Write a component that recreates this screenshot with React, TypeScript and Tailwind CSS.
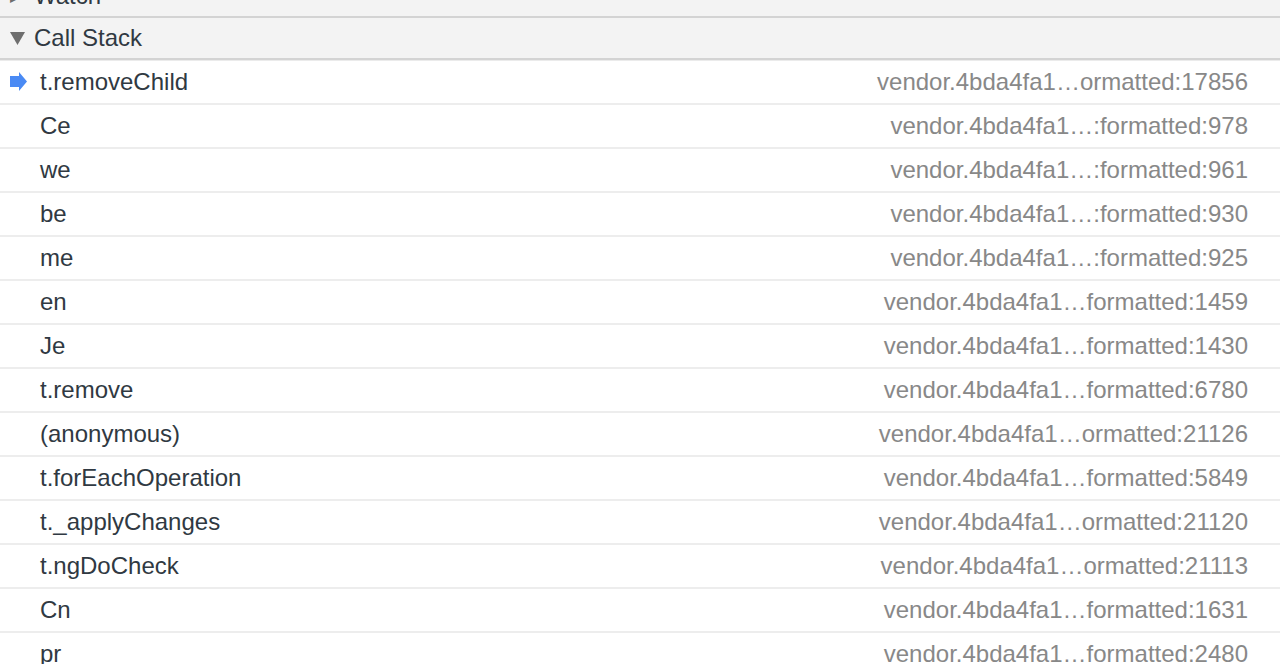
import React from 'react';

type Frame = { name: string; location: string };

const frames: Frame[] = [
  { name: 't.removeChild', location: 'vendor.4bda4fa1…ormatted:17856' },
  { name: 'Ce', location: 'vendor.4bda4fa1…:formatted:978' },
  { name: 'we', location: 'vendor.4bda4fa1…:formatted:961' },
  { name: 'be', location: 'vendor.4bda4fa1…:formatted:930' },
  { name: 'me', location: 'vendor.4bda4fa1…:formatted:925' },
  { name: 'en', location: 'vendor.4bda4fa1…formatted:1459' },
  { name: 'Je', location: 'vendor.4bda4fa1…formatted:1430' },
  { name: 't.remove', location: 'vendor.4bda4fa1…formatted:6780' },
  { name: '(anonymous)', location: 'vendor.4bda4fa1…ormatted:21126' },
  { name: 't.forEachOperation', location: 'vendor.4bda4fa1…formatted:5849' },
  { name: 't._applyChanges', location: 'vendor.4bda4fa1…ormatted:21120' },
  { name: 't.ngDoCheck', location: 'vendor.4bda4fa1…ormatted:21113' },
  { name: 'Cn', location: 'vendor.4bda4fa1…formatted:1631' },
  { name: 'pr', location: 'vendor.4bda4fa1…formatted:2480' },
];

const CurrentArrow = () => (
  <svg width="18" height="20" viewBox="0 0 18 20" className="shrink-0">
    <path d="M0 4h9V0l8 9.5L9 19v-4H0z" fill="#4a8af4" />
  </svg>
);

export default function App() {
  return (
    <div
      className="w-[1280px] h-[664px] overflow-hidden bg-white text-[24px] leading-none"
      style={{ fontFamily: '"Liberation Sans", Arial, sans-serif' }}
    >
      {/* Watch section (collapsed, scrolled mostly off) */}
      <div className="h-[18px] bg-[#f3f3f3] border-b-2 border-[#d3d3d3] overflow-hidden relative">
        <div className="flex items-center gap-[12px] pl-[10px] -mt-[24px] h-[40px] text-[#303942]">
          <span className="text-[#6e6e6e] text-[16px]">▶</span>
          <span>Watch</span>
        </div>
      </div>

      {/* Call Stack header */}
      <div className="h-[42px] bg-[#f3f3f3] border-b-2 border-[#d3d3d3] flex items-center pl-[10px] text-[#303942]">
        <svg width="15" height="13" viewBox="0 0 15 13" className="mr-[9px] mt-[1px]">
          <path d="M0 0h15L7.5 13z" fill="#6e6e6e" />
        </svg>
        <span>Call Stack</span>
      </div>

      <div className="border-t border-[#ebebeb]">
        {frames.map((f, i) => (
          <div
            key={i}
            className="h-[44px] border-b-2 border-[#ededed] flex items-center pr-[32px]"
          >
            <div className="w-[40px] pl-[10px] flex items-center">
              {i === 0 && <CurrentArrow />}
            </div>
            <span className="text-[#303942] flex-1">{f.name}</span>
            <span className="text-[#888888]">{f.location}</span>
          </div>
        ))}
      </div>
    </div>
  );
}
